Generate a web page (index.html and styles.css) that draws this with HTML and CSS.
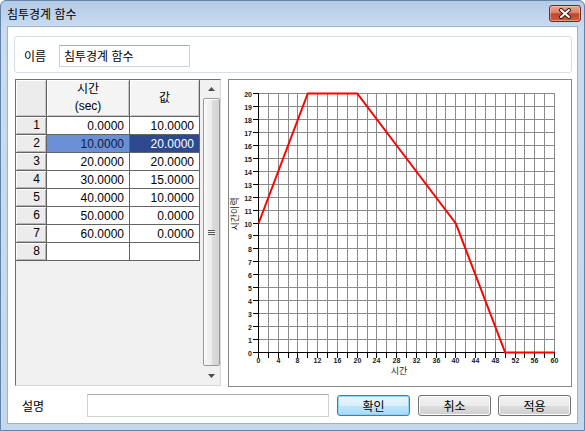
FILE: index.html
```html
<!DOCTYPE html>
<html lang="ko">
<head>
<meta charset="utf-8">
<title>침투경계 함수</title>
<link rel="stylesheet" href="styles.css">
</head>
<body>
<div class="window">
  <div class="titlebar">
    <span class="title">침투경계 함수</span>
    <button class="close" type="button" aria-label="닫기">
      <svg width="14" height="11" viewBox="0 0 14 11"><path d="M3 2L11 9M11 2L3 9" stroke="#3a1c14" stroke-width="4" stroke-linecap="round"/><path d="M3 2L11 9M11 2L3 9" stroke="#ffffff" stroke-width="2" stroke-linecap="round"/></svg>
    </button>
  </div>
  <div class="client">
    <div class="name-panel">
      <span class="name-label">이름</span>
      <div class="textbox name-box">침투경계 함수</div>
    </div>
    <div class="main-row">
      <div class="grid-box">
        <div class="table">
          <div class="hd corner"></div>
          <div class="hd col">시간<br>(sec)</div>
          <div class="hd col">값</div>

          <div class="rh">1</div><div class="cell">0.0000</div><div class="cell">10.0000</div>
          <div class="rh">2</div><div class="cell sel1">10.0000</div><div class="cell sel2">20.0000</div>
          <div class="rh">3</div><div class="cell">20.0000</div><div class="cell">20.0000</div>
          <div class="rh">4</div><div class="cell">30.0000</div><div class="cell">15.0000</div>
          <div class="rh">5</div><div class="cell">40.0000</div><div class="cell">10.0000</div>
          <div class="rh">6</div><div class="cell">50.0000</div><div class="cell">0.0000</div>
          <div class="rh">7</div><div class="cell">60.0000</div><div class="cell">0.0000</div>
          <div class="rh">8</div><div class="cell"></div><div class="cell"></div>
        </div>
        <div class="sb">
          <div class="sb-btn up"><svg width="7" height="4" viewBox="0 0 7 4"><path d="M0 4L3.5 0L7 4Z" fill="#4d4d4d"/></svg></div>
          <div class="sb-thumb"><span class="grip"></span></div>
          <div class="sb-btn down"><svg width="7" height="4" viewBox="0 0 7 4"><path d="M0 0L3.5 4L7 0Z" fill="#4d4d4d"/></svg></div>
        </div>
      </div>
      <div class="chart">
        <svg width="342" height="306" viewBox="0 0 342 306">
          <path fill="none" stroke="#8a8a8a" stroke-width="1" d="M29 13.5h297M29 26.5h297M29 39.5h297M29 52.5h297M29 65.5h297M29 78.5h297M29 91.5h297M29 104.5h297M29 117.5h297M29 130.5h297M29 143.5h297M29 155.5h297M29 168.5h297M29 181.5h297M29 194.5h297M29 207.5h297M29 220.5h297M29 233.5h297M29 246.5h297M29 259.5h297
          M39.5 13v260M49.5 13v260M59.5 13v260M68.5 13v260M78.5 13v260M88.5 13v260M98.5 13v260M108.5 13v260M118.5 13v260M128.5 13v260M138.5 13v260M147.5 13v260M157.5 13v260M167.5 13v260M177.5 13v260M187.5 13v260M197.5 13v260M207.5 13v260M216.5 13v260M226.5 13v260M236.5 13v260M246.5 13v260M256.5 13v260M266.5 13v260M276.5 13v260M286.5 13v260M295.5 13v260M305.5 13v260M315.5 13v260M325.5 13v260"/>
          <path fill="none" stroke="#000" stroke-width="1" d="M29.5 13v265M24 272.5h302
          M24 13.5h5M24 26.5h5M24 39.5h5M24 52.5h5M24 65.5h5M24 78.5h5M24 91.5h5M24 104.5h5M24 117.5h5M24 130.5h5M24 143.5h5M24 155.5h5M24 168.5h5M24 181.5h5M24 194.5h5M24 207.5h5M24 220.5h5M24 233.5h5M24 246.5h5M24 259.5h5
          M39.5 273v5M49.5 273v5M59.5 273v5M68.5 273v5M78.5 273v5M88.5 273v5M98.5 273v5M108.5 273v5M118.5 273v5M128.5 273v5M138.5 273v5M147.5 273v5M157.5 273v5M167.5 273v5M177.5 273v5M187.5 273v5M197.5 273v5M207.5 273v5M216.5 273v5M226.5 273v5M236.5 273v5M246.5 273v5M256.5 273v5M266.5 273v5M276.5 273v5M286.5 273v5M295.5 273v5M305.5 273v5M315.5 273v5M325.5 273v5"/>
          <polyline fill="none" stroke="#ff0000" stroke-width="2" points="29.5,143.5 78.8,13.5 128.2,13.5 177.5,78.5 226.8,143.5 276.2,272.5 325.5,272.5"/>
          <g class="ylab" text-anchor="end">
            <text x="23" y="16.5">20</text><text x="23" y="29.5">19</text><text x="23" y="42.5">18</text><text x="23" y="55.5">17</text><text x="23" y="68.5">16</text><text x="23" y="81.5">15</text><text x="23" y="94.5">14</text><text x="23" y="107.5">13</text><text x="23" y="120.5">12</text><text x="23" y="133.5">11</text><text x="23" y="146.5">10</text><text x="23" y="158.5">9</text><text x="23" y="171.5">8</text><text x="23" y="184.5">7</text><text x="23" y="197.5">6</text><text x="23" y="210.5">5</text><text x="23" y="223.5">4</text><text x="23" y="236.5">3</text><text x="23" y="249.5">2</text><text x="23" y="262.5">1</text><text x="23" y="275.5">0</text>
          </g>
          <g class="xlab" text-anchor="middle">
            <text x="29.5" y="283">0</text><text x="49.5" y="283">4</text><text x="68.5" y="283">8</text><text x="88.5" y="283">12</text><text x="108.5" y="283">16</text><text x="128.5" y="283">20</text><text x="147.5" y="283">24</text><text x="167.5" y="283">28</text><text x="187.5" y="283">32</text><text x="207.5" y="283">36</text><text x="226.5" y="283">40</text><text x="246.5" y="283">44</text><text x="266.5" y="283">48</text><text x="286.5" y="283">52</text><text x="305.5" y="283">56</text><text x="325.5" y="283">60</text>
          </g>
          <text class="axtitle" x="170" y="294" text-anchor="middle">시간</text>
          <text class="axtitle" transform="translate(9 134) rotate(-90)" text-anchor="middle">시간이력</text>
        </svg>
      </div>
    </div>
    <div class="bottom-row">
      <span class="desc-label">설명</span>
      <div class="textbox desc-box"></div>
      <button class="btn default" type="button">확인</button>
      <button class="btn" type="button">취소</button>
      <button class="btn last" type="button">적용</button>
    </div>
  </div>
</div>
</body>
</html>
```

FILE: styles.css
```css
html, body {
  margin: 0;
  padding: 0;
  background: #ffffff;
}

body {
  font-family: "Liberation Sans", "Noto Sans CJK KR", sans-serif;
  font-size: 12px;
  color: #000;
}

.window {
  width: 585px;
  height: 431px;
  box-sizing: border-box;
  border: 1px solid #6483aa;
  border-radius: 6px 6px 0 0;
  background: linear-gradient(to bottom, #b4cbe6 0px, #c9dbf0 26px, #c4d7ed 100%);
  padding: 0 6px 6px 6px;
  display: flex;
  flex-direction: column;
}

.titlebar {
  height: 25px;
  flex: none;
  display: flex;
  align-items: center;
}

.title {
  font-family: "Noto Sans CJK KR", sans-serif;
  font-size: 12px;
  line-height: 14px;
  margin-left: 0;
  color: #000;
}

.close {
  margin-left: auto;
  margin-right: -3px;
  width: 32px;
  height: 17px;
  padding: 0;
  border: 1px solid #6e2b1e;
  border-radius: 3px;
  background: linear-gradient(to bottom, #e8a593 0%, #d98068 45%, #c2462d 52%, #cf5a3c 100%);
  box-shadow: inset 0 0 0 1px rgba(255, 220, 210, 0.45);
  display: flex;
  align-items: center;
  justify-content: center;
}

.close svg {
  display: block;
}

.client {
  flex: 1;
  background: #ffffff;
  border: 1px solid #9bb1cc;
  display: flex;
  flex-direction: column;
  min-height: 0;
}

.name-panel {
  margin: 9px 0 0 6px;
  width: 558px;
  height: 37px;
  box-sizing: border-box;
  border: 1px solid #d5dfe5;
  border-radius: 3px;
  display: flex;
  align-items: flex-start;
  padding: 8px 0 0 9px;
  flex: none;
}

.name-label {
  width: 35px;
  line-height: 22px;
  font-family: "Noto Sans CJK KR", sans-serif;
  font-size: 12px;
}

.textbox {
  box-sizing: border-box;
  height: 22px;
  border: 1px solid #cdd0d5;
  border-top-color: #abadb3;
  background: #fff;
  font-family: "Noto Sans CJK KR", sans-serif;
  font-size: 12px;
  line-height: 20px;
  padding-left: 4px;
}

.name-box {
  width: 131px;
}

.main-row {
  margin-top: 6px;
  height: 308px;
  display: flex;
  align-items: flex-start;
  flex: none;
}

.grid-box {
  margin-left: 7px;
  width: 206px;
  height: 307px;
  box-sizing: border-box;
  border: 1px solid;
  border-color: #6f6f6f #d8d8d8 #d8d8d8 #6f6f6f;
  background: #f0f0f0;
  display: flex;
  align-items: flex-start;
}

.table {
  display: grid;
  grid-template-columns: 30px 82px 69px;
  grid-template-rows: 36px repeat(8, 17px);
  gap: 1px;
  background: #646464;
  border-right: 1px solid #646464;
  border-bottom: 1px solid #646464;
}

.hd {
  background: #f4f4f4;
  box-shadow: inset 1px 1px #ffffff, inset -1px -1px #c8c8c8;
  font-family: "Liberation Sans", "Noto Sans CJK KR", sans-serif;
  font-size: 12px;
  line-height: 17px;
  text-align: center;
  display: flex;
  align-items: center;
  justify-content: center;
}

.corner {
  background: #ececec;
}

.rh {
  background: #ececec;
  box-shadow: inset 1px 1px #ffffff, inset -1px -1px #b4b4b4;
  text-align: right;
  padding-right: 6px;
  line-height: 17px;
}

.cell {
  background: #ffffff;
  text-align: right;
  padding-right: 5px;
  line-height: 18px;
  color: #000;
}

.cell.sel1 {
  background: #6a8fd5;
  color: #0c1a3c;
}

.cell.sel2 {
  background: #2d4a90;
  color: #ffffff;
}

.sb {
  margin-left: 3px;
  width: 17px;
  height: 305px;
  display: flex;
  flex-direction: column;
}

.sb-btn {
  display: flex;
  align-items: center;
  justify-content: center;
}

.sb-btn svg {
  display: block;
}

.sb-btn.up {
  height: 18px;
}

.sb-btn.down {
  height: 19px;
}

.sb-thumb {
  flex: 1;
  box-sizing: border-box;
  border: 1px solid #999999;
  border-radius: 2px;
  background: linear-gradient(to right, #f7f7f7 0%, #ececec 50%, #dcdcdc 51%, #d4d4d4 100%);
  box-shadow: inset 1px 1px #ffffff;
  display: flex;
  align-items: center;
  justify-content: center;
}

.grip {
  width: 7px;
  height: 5px;
  background: repeating-linear-gradient(to bottom, #555555 0px, #555555 1px, #f2f2f2 1px, #f2f2f2 2px);
}

.chart {
  margin-left: 7px;
  width: 344px;
  height: 308px;
  box-sizing: border-box;
  border: 1px solid #888888;
  background: #ffffff;
}

.chart svg {
  display: block;
}

.ylab text,
.xlab text {
  font-family: "Liberation Sans", sans-serif;
  font-weight: bold;
  font-size: 7px;
  fill: #1a1a1a;
}

.axtitle {
  font-family: "Noto Sans CJK KR", sans-serif;
  font-size: 9px;
  fill: #1a1a1a;
}

.bottom-row {
  margin-top: 7px;
  height: 23px;
  display: flex;
  align-items: center;
  padding-left: 14px;
  flex: none;
}

.desc-label {
  width: 65px;
  font-family: "Noto Sans CJK KR", sans-serif;
  font-size: 12px;
  line-height: 14px;
}

.desc-box {
  width: 242px;
  height: 23px;
}

.btn {
  margin-left: 8px;
  width: 73px;
  height: 21px;
  padding: 0;
  border: 1px solid #707070;
  border-radius: 3px;
  background: linear-gradient(to bottom, #f2f2f2 0%, #ebebeb 50%, #dddddd 51%, #cfcfcf 100%);
  box-shadow: inset 0 0 0 1px #fbfbfb;
  font-family: "Noto Sans CJK KR", sans-serif;
  font-size: 12px;
  line-height: 17px;
  color: #000;
}

.btn.default {
  border-color: #3c7fb1;
  background: linear-gradient(to bottom, #eaf6fd 0%, #d9f0fc 50%, #bee6fd 51%, #a7d9f5 100%);
  box-shadow: inset 0 0 0 1px #8fd3f7;
}

.btn.last {
  margin-left: 7px;
}
```
